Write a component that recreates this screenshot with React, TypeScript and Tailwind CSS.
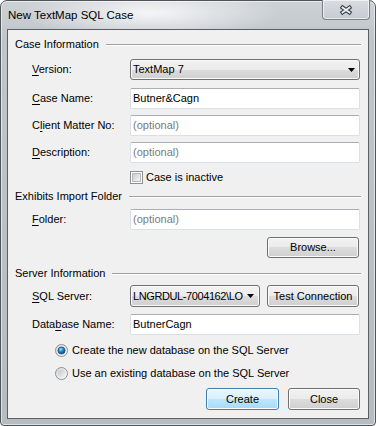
import { ReactNode } from "react";

const Key = ({ children }: { children: ReactNode }) => (
  <span className="underline decoration-1 underline-offset-[2px]">{children}</span>
);

const GroupHeader = ({ title, className }: { title: string; className: string }) => (
  <div className={`flex shrink-0 items-center pl-[7px] pr-[7px] ${className}`}>
    <span className="whitespace-nowrap">{title}</span>
    <div className="ml-[7px] h-[2px] flex-1 border-t border-b border-t-[#a0a0a0] border-b-white" />
  </div>
);

const Row = ({ label, children, className }: { label: ReactNode; children: ReactNode; className: string }) => (
  <div className={`flex shrink-0 items-center pl-[24px] pr-[8px] ${className}`}>
    <div className="w-[98px] shrink-0 whitespace-nowrap">{label}</div>
    <div className="flex h-full flex-1">{children}</div>
  </div>
);

const TextBox = ({ value, placeholder }: { value?: string; placeholder?: string }) => (
  <div className="flex h-full flex-1 items-center rounded-[2px] border border-[#dbdfe6] border-t-[#abadb3] bg-white pl-[2px]">
    {value ? <span>{value}</span> : <span className="text-[#7a7a7a]">{placeholder}</span>}
  </div>
);

const Arrow = () => (
  <svg width="7" height="4" viewBox="0 0 7 4" className="shrink-0">
    <path d="M0 0H7L3.5 4Z" fill="#000" />
  </svg>
);

const ComboBox = ({ value, className, textClass }: { value: string; className: string; textClass?: string }) => (
  <div
    className={`flex h-full items-center rounded-[3px] border border-[#707070] bg-[linear-gradient(#f2f2f2,#ebebeb_50%,#dddddd_50%,#cfcfcf)] pl-[2px] shadow-[inset_0_0_0_1px_#fbfbfb] ${className}`}
  >
    <span className={`flex-1 overflow-hidden whitespace-nowrap ${textClass ?? ""}`}>{value}</span>
    <Arrow />
  </div>
);

const Button = ({ children, className, primary }: { children: ReactNode; className: string; primary?: boolean }) => (
  <div
    className={`flex h-full items-center justify-center rounded-[3px] border ${
      primary
        ? "border-[#3c7fb1] bg-[linear-gradient(#eaf6fd,#d9f0fc_50%,#bee6fd_50%,#a7d9f5)] shadow-[inset_0_0_0_1px_#fff]"
        : "border-[#707070] bg-[linear-gradient(#f2f2f2,#ebebeb_50%,#dddddd_50%,#cfcfcf)] shadow-[inset_0_0_0_1px_#fcfcfc]"
    } ${className}`}
  >
    {children}
  </div>
);

const CheckBox = () => (
  <div className="flex h-[13px] w-[13px] shrink-0 items-center justify-center border border-[#8e8f8f] bg-white">
    <div className="h-[9px] w-[9px] border border-[#b4b8bd] bg-[linear-gradient(135deg,#c9cdd2,#f6f6f6)]" />
  </div>
);

const Radio = ({ checked }: { checked?: boolean }) => (
  <svg width="13" height="13" viewBox="0 0 13 13" className="shrink-0">
    <defs>
      <linearGradient id="rbg" x1="0" y1="0" x2="1" y2="1">
        <stop offset="0" stopColor="#dcdcdc" />
        <stop offset="1" stopColor="#fbfbfb" />
      </linearGradient>
      <radialGradient id="rdot" cx="0.4" cy="0.35" r="0.7">
        <stop offset="0" stopColor="#9fe0ff" />
        <stop offset="0.45" stopColor="#2a86c8" />
        <stop offset="1" stopColor="#0d3d70" />
      </radialGradient>
      <linearGradient id="roff" x1="0" y1="0" x2="1" y2="1">
        <stop offset="0" stopColor="#c3c7cc" />
        <stop offset="1" stopColor="#f3f3f3" />
      </linearGradient>
    </defs>
    <circle cx="6.5" cy="6.5" r="6" fill="url(#rbg)" stroke="#8e8f8f" />
    {checked ? (
      <circle cx="6.5" cy="6.5" r="3.6" fill="url(#rdot)" stroke="#1f5688" strokeWidth="0.8" />
    ) : (
      <circle cx="6.5" cy="6.5" r="4" fill="url(#roff)" />
    )}
  </svg>
);

const SERVER = "LNGRDUL-7004162\\LO";

export default function App() {
  return (
    <div className="h-[426px] w-[376px] font-['Liberation_Sans',Arial,sans-serif] text-[11px] leading-[13px] text-black">
      <div className="flex h-full w-full flex-col rounded-t-[7px] rounded-b-[4px] border border-[#50555a] bg-[linear-gradient(180deg,#cdd2d7,#c0c5ca_40px,#b7bcc1)] shadow-[inset_0_0_0_1px_rgba(255,255,255,0.55)]">
        {/* title bar */}
        <div className="flex h-[28px] shrink-0 items-start rounded-t-[6px] bg-[radial-gradient(ellipse_130px_26px_at_150px_12px,rgba(255,255,255,0.8),rgba(255,255,255,0))]">
          <div className="flex h-full flex-1 items-center pl-[7px] text-[11.5px]">New TextMap SQL Case</div>
          <div className="-mt-px mr-[5px] flex h-[20px] w-[48px] items-center justify-center rounded-b-[4px] border border-t-0 border-[#7b8087] bg-[linear-gradient(#d9dde2,#c6cbd1)] shadow-[inset_0_0_0_1px_rgba(255,255,255,0.6)]">
            <svg width="16" height="12" viewBox="0 0 16 12">
              <path d="M4.5 3.5L11.5 8.5M11.5 3.5L4.5 8.5" stroke="#3d434b" strokeWidth="4" strokeLinecap="square" />
              <path d="M4.5 3.5L11.5 8.5M11.5 3.5L4.5 8.5" stroke="#eceff2" strokeWidth="1.8" strokeLinecap="square" />
            </svg>
          </div>
        </div>

        {/* client area */}
        <div className="mx-[6px] flex h-[390px] shrink-0 flex-col border border-[#5b5f64] bg-[#f0f0f0]">
          <GroupHeader title="Case Information" className="h-[29px]" />

          <Row className="h-[21px]" label={<><Key>V</Key>ersion:</>}>
            <ComboBox value="TextMap 7" className="flex-1 pr-[4px]" />
          </Row>
          <Row className="mt-[8px] h-[21px]" label={<><Key>C</Key>ase Name:</>}>
            <TextBox value="Butner&Cagn" />
          </Row>
          <Row className="mt-[6px] h-[21px]" label={<>C<Key>l</Key>ient Matter No:</>}>
            <TextBox placeholder="(optional)" />
          </Row>
          <Row className="mt-[6px] h-[21px]" label={<><Key>D</Key>escription:</>}>
            <TextBox placeholder="(optional)" />
          </Row>
          <div className="mt-[8px] flex h-[13px] shrink-0 items-center gap-[3px] pl-[122px]">
            <CheckBox />
            <span>Case is inactive</span>
          </div>

          <GroupHeader title="Exhibits Import Folder" className="h-[25px]" />
          <Row className="h-[21px]" label={<><Key>F</Key>older:</>}>
            <TextBox placeholder="(optional)" />
          </Row>
          <div className="mt-[7px] flex h-[21px] shrink-0 justify-end pr-[9px]">
            <Button className="w-[92px]">Browse...</Button>
          </div>

          <GroupHeader title="Server Information" className="h-[27px] pt-[4px]" />
          <div className="flex h-[22px] shrink-0 items-center pl-[24px] pr-[9px]">
            <div className="w-[98px] shrink-0 whitespace-nowrap">
              <Key>S</Key>QL Server:
            </div>
            <ComboBox value={SERVER} className="w-[130px] pr-[5px]" textClass="tracking-[-0.4px]" />
            <div className="flex-1" />
            <Button className="w-[92px]">Test Connection</Button>
          </div>
          <Row className="mt-[7px] h-[21px]" label={<>Data<Key>b</Key>ase Name:</>}>
            <TextBox value="ButnerCagn" />
          </Row>

          <div className="mt-[8px] flex h-[14px] shrink-0 items-center gap-[4px] pl-[47px]">
            <Radio checked />
            <span>Create the new database on the SQL Server</span>
          </div>
          <div className="mt-[9px] flex h-[14px] shrink-0 items-center gap-[4px] pl-[47px]">
            <Radio />
            <span>Use an existing database on the SQL Server</span>
          </div>

          <div className="mt-[8px] flex h-[22px] shrink-0 justify-end gap-[9px] pr-[8px]">
            <Button primary className="w-[73px]">
              Create
            </Button>
            <Button className="w-[72px]">Close</Button>
          </div>
        </div>
      </div>
    </div>
  );
}
